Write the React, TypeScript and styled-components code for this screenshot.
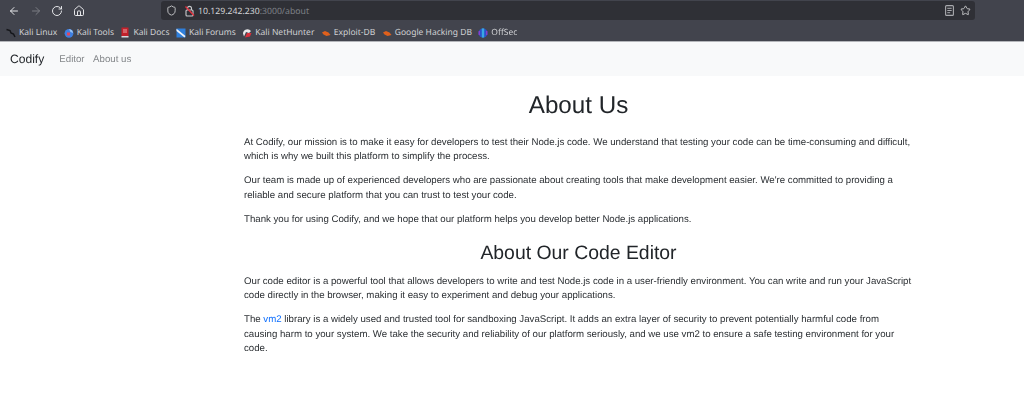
import React from "react";
import styled, { createGlobalStyle } from "styled-components";
import { ArrowLeft, ArrowRight, RotateCw, Home, Shield, Star } from "lucide-react";

const Global = createGlobalStyle`
  html, body { margin: 0; padding: 0; background: #fff; }
  body {
    font-family: "Liberation Sans", Arial, sans-serif;
    width: 1024px;
    height: 419px;
    overflow: hidden;
    text-rendering: geometricPrecision;
  }
`;
const Page = styled.div`
  filter: blur(0.4px);
`;
const Chrome = styled.div`
  background: #42444d;
  height: 41px;
  border-bottom: 1px solid #b4b6ba;
`;
const TopRow = styled.div`
  display: flex;
  align-items: center;
  height: 21px;
`;
const NavIcons = styled.div`
  display: flex;
  align-items: center;
  gap: 9.7px;
  padding-left: 8px;
  width: 152px;
  box-sizing: border-box;
`;
const NavIcon = styled.span<{ $dim?: boolean }>`
  display: flex;
  width: 12px;
  color: ${(p) => (p.$dim ? "#7b7d84" : "#e4e5e8")};
`;
const UrlBar = styled.div`
  width: 814px;
  margin-left: 9px;
  height: 19px;
  background: #2f3036;
  border-radius: 3px;
  display: flex;
  align-items: center;
  padding: 0 4px 0 5px;
  box-sizing: border-box;
  gap: 6px;
  color: #c9cacd;
`;
const LockSlot = styled.span`
  display: flex;
  margin-left: 1px;
  margin-right: -3px;
`;
const Url = styled.div`
  flex: 1;
  font-family: "Noto Sans", sans-serif;
  font-size: 8.7px;
  color: #d4d5d8;
  padding-top: 1px;
`;
const UrlDim = styled.span`
  color: #7e8086;
`;
const BookmarkRow = styled.div`
  display: flex;
  align-items: center;
  height: 20px;
  padding: 3px 0 0 6px;
  box-sizing: border-box;
  gap: 6.4px;
`;
const Bookmark = styled.div`
  display: flex;
  align-items: center;
  gap: 3px;
  font-family: "Noto Sans", sans-serif;
  font-size: 8.5px;
  color: #d0d1d4;
  white-space: nowrap;
`;
const Navbar = styled.nav`
  background: #f8f9fa;
  height: 34px;
  display: flex;
  align-items: center;
  padding-left: 10px;
`;
const Brand = styled.div`
  font-size: 12.1px;
  color: #212529;
  margin-right: 15px;
`;
const NavLink = styled.a`
  font-size: 9.7px;
  color: #85888b;
  margin-right: 8.5px;
`;
const Main = styled.main`
  width: 669px;
  margin-left: 244px;
  color: #212529;
  padding-top: 15px;
`;
const H1 = styled.h1`
  font-size: 24.2px;
  font-weight: 400;
  line-height: 30px;
  text-align: center;
  margin: 0 0 14.5px;
`;
const H2 = styled.h2`
  font-size: 19.4px;
  font-weight: 400;
  line-height: 24px;
  text-align: center;
  margin: 13.5px 0 10px;
`;
const P = styled.p`
  font-size: 9.67px;
  line-height: 14.5px;
  margin: 0 0 9.6px;
  color: #2b2f33;
`;
const A = styled.a`
  color: #0d6efd;
`;

const StruckLock = () => (
  <svg width="11" height="12" viewBox="0 0 11 12" fill="none">
    <path d="M3.5 5 V3.4 A2 2 0 0 1 7.5 3.4 V5" stroke="#c9cacd" strokeWidth="1.1" />
    <rect x="2" y="5" width="7" height="6" rx="1" stroke="#c9cacd" strokeWidth="1.1" />
    <path d="M1.5 1.5 L10 10.5" stroke="#e0313f" strokeWidth="1.4" />
  </svg>
);

const ReaderIcon = () => (
  <svg width="9" height="11" viewBox="0 0 9 11" fill="none">
    <rect x="0.6" y="0.6" width="7.8" height="9.8" rx="1" stroke="#a9aaae" strokeWidth="1.1" />
    <path d="M2.3 3.3 H6.7 M2.3 5.5 H6.7 M2.3 7.7 H5.2" stroke="#a9aaae" strokeWidth="1" />
  </svg>
);

const Favicon = ({ kind }: { kind: string }) => {
  switch (kind) {
    case "linux":
      return (
        <svg width="10" height="10" viewBox="0 0 10 10" fill="none">
          <path d="M0.5 1.5 L4 2.5 L5 5 L7.5 6 L9 9" stroke="#15161a" strokeWidth="1.5" />
        </svg>
      );
    case "tools":
      return (
        <svg width="10" height="10" viewBox="0 0 10 10">
          <circle cx="5" cy="5.3" r="4.4" fill="#3f7fe0" />
          <rect x="3" y="4.5" width="3" height="3" fill="#e2475e" />
          <path d="M5 1.2 A4 4 0 0 1 9 5 L6.5 4 Z" fill="#9ac4f2" />
        </svg>
      );
    case "docs":
      return (
        <svg width="10" height="11" viewBox="0 0 10 11">
          <rect x="1.5" y="0.5" width="7" height="9" fill="#c3202a" />
          <path d="M3 3 H7 M3 5 H7" stroke="#f0c8c8" strokeWidth="0.8" />
          <rect x="1.5" y="9" width="7" height="1.5" fill="#d8d8de" />
        </svg>
      );
    case "forums":
      return (
        <svg width="10" height="10" viewBox="0 0 10 10">
          <rect x="0.5" y="0.5" width="9" height="9" fill="#2f7fdc" />
          <path d="M0.5 0.8 L9.5 8 L8.5 9.5 L0.5 3 Z" fill="#f2f4f8" />
        </svg>
      );
    case "hunter":
      return (
        <svg width="10" height="10" viewBox="0 0 10 10">
          <path d="M1 5.5 A4.5 4.5 0 0 1 9 3 L7 5 L4 4 L2 8.5 Z" fill="#e8e8ea" />
          <path d="M3 9.5 L5 5 L9.5 5 L8 8.5 Z" fill="#d9303c" />
        </svg>
      );
    case "fire":
      return (
        <svg width="10" height="10" viewBox="0 0 10 10">
          <path d="M1 4.5 L4 3 L7.5 4.5 L9.5 7 L5.5 8 L2.5 6.5 Z" fill="#e0601c" />
        </svg>
      );
    default:
      return (
        <svg width="10" height="10" viewBox="0 0 10 10">
          <circle cx="5" cy="5" r="4.6" fill="#2a52c8" />
          <rect x="3.8" y="0.4" width="2.4" height="9.2" fill="#38a8e0" />
          <rect x="0.6" y="3" width="1.4" height="4" fill="#8a3ec8" />
          <rect x="8" y="3" width="1.4" height="4" fill="#8a3ec8" />
        </svg>
      );
  }
};

const bookmarks = [
  ["linux", "Kali Linux"],
  ["tools", "Kali Tools"],
  ["docs", "Kali Docs"],
  ["forums", "Kali Forums"],
  ["hunter", "Kali NetHunter"],
  ["fire", "Exploit-DB"],
  ["fire", "Google Hacking DB"],
  ["off", "OffSec"],
];

export default function App() {
  return (
    <Page>
      <Global />
      <Chrome>
        <TopRow>
          <NavIcons>
            <NavIcon><ArrowLeft size={12} /></NavIcon>
            <NavIcon $dim><ArrowRight size={12} /></NavIcon>
            <NavIcon><RotateCw size={12} /></NavIcon>
            <NavIcon><Home size={12} /></NavIcon>
          </NavIcons>
          <UrlBar>
            <Shield size={11} />
            <LockSlot><StruckLock /></LockSlot>
            <Url>10.129.242.230<UrlDim>:3000/about</UrlDim></Url>
            <ReaderIcon />
            <Star size={11} />
          </UrlBar>
        </TopRow>
        <BookmarkRow>
          {bookmarks.map(([k, t]) => (
            <Bookmark key={t}><Favicon kind={k} />{t}</Bookmark>
          ))}
        </BookmarkRow>
      </Chrome>
      <Navbar>
        <Brand>Codify</Brand>
        <NavLink>Editor</NavLink>
        <NavLink>About us</NavLink>
      </Navbar>
      <Main>
        <H1>About Us</H1>
        <P>At Codify, our mission is to make it easy for developers to test their Node.js code. We understand that testing your code can be time-consuming and difficult, which is why we built this platform to simplify the process.</P>
        <P>Our team is made up of experienced developers who are passionate about creating tools that make development easier. We're committed to providing a reliable and secure platform that you can trust to test your code.</P>
        <P>Thank you for using Codify, and we hope that our platform helps you develop better Node.js applications.</P>
        <H2>About Our Code Editor</H2>
        <P>Our code editor is a powerful tool that allows developers to write and test Node.js code in a user-friendly environment. You can write and run your JavaScript code directly in the browser, making it easy to experiment and debug your applications.</P>
        <P>The <A>vm2</A> library is a widely used and trusted tool for sandboxing JavaScript. It adds an extra layer of security to prevent potentially harmful code from causing harm to your system. We take the security and reliability of our platform seriously, and we use vm2 to ensure a safe testing environment for your code.</P>
      </Main>
    </Page>
  );
}
